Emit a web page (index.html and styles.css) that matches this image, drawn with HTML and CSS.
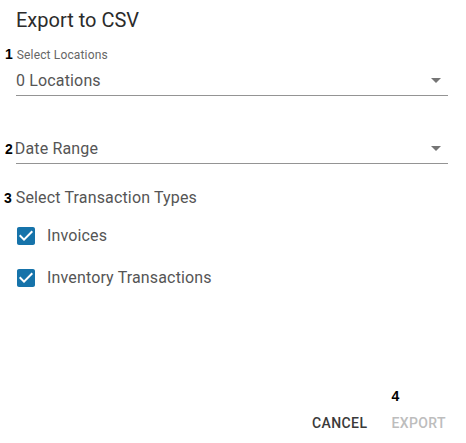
FILE: index.html
```html
<!DOCTYPE html>
<html lang="en">
<head>
<meta charset="utf-8">
<title>Export to CSV</title>
<link rel="stylesheet" href="styles.css">
</head>
<body>
<div class="dialog">
  <h2 class="title">Export to CSV</h2>

  <div class="field field-locations">
    <div class="field-label"><b class="mark mark-1">1</b>Select Locations</div>
    <div class="select-row">
      <span class="select-value">0 Locations</span>
      <svg class="arrow" viewBox="0 0 24 24" width="24" height="24"><path d="M7 9l5 5 5-5z"/></svg>
    </div>
  </div>

  <div class="field field-dates">
    <div class="select-row">
      <span class="select-value"><b class="mark mark-2">2</b>Date Range</span>
      <svg class="arrow" viewBox="0 0 24 24" width="24" height="24"><path d="M7 9l5 5 5-5z"/></svg>
    </div>
  </div>

  <div class="group">
    <div class="group-label"><b class="mark mark-3">3</b>Select Transaction Types</div>
    <label class="check-row">
      <span class="check-btn">
        <svg viewBox="0 0 24 24" width="24" height="24"><path d="M19 3H5c-1.11 0-2 .9-2 2v14c0 1.1.89 2 2 2h14c1.11 0 2-.9 2-2V5c0-1.1-.89-2-2-2zm-9 14l-5-5 1.410-1.41L10 14.170l7.59-7.59L19 8l-9 9z"/></svg>
      </span>
      <span class="check-text">Invoices</span>
    </label>
    <label class="check-row">
      <span class="check-btn">
        <svg viewBox="0 0 24 24" width="24" height="24"><path d="M19 3H5c-1.11 0-2 .9-2 2v14c0 1.1.89 2 2 2h14c1.11 0 2-.9 2-2V5c0-1.1-.89-2-2-2zm-9 14l-5-5 1.410-1.41L10 14.170l7.59-7.59L19 8l-9 9z"/></svg>
      </span>
      <span class="check-text">Inventory Transactions</span>
    </label>
  </div>

  <div class="actions">
    <button class="btn btn-cancel" type="button">Cancel</button>
    <button class="btn btn-export" type="button" disabled><b class="mark mark-4">4</b>Export</button>
  </div>
</div>
</body>
</html>
```

FILE: styles.css
```css
* { box-sizing: border-box; }

html, body {
  margin: 0;
  padding: 0;
  background: #ffffff;
}

body {
  font-family: Roboto, "Liberation Sans", Arial, sans-serif;
  color: #555555;
}

.dialog {
  width: 466px;
  height: 443px;
  padding: 8px 18px 2px 16px;
  display: flex;
  flex-direction: column;
  background: #ffffff;
}

.title {
  margin: 0;
  font-size: 20px;
  line-height: 24px;
  font-weight: 400;
  color: #2b2b2b;
}

.mark {
  font-family: "Liberation Sans", Arial, sans-serif;
  font-weight: 700;
  font-size: 14px;
  line-height: 0;
  letter-spacing: 0;
  color: #000000;
}

.field-locations {
  margin-top: 15px;
}

.field-label {
  font-size: 12px;
  line-height: 16px;
  letter-spacing: 0.15px;
  color: #666666;
}

.mark-1 {
  margin-left: -11px;
  margin-right: 4px;
}

.select-row {
  display: flex;
  align-items: center;
  justify-content: space-between;
  padding-bottom: 2px;
  border-bottom: 1px solid #949494;
}

.field-locations .select-row {
  margin-top: 6px;
}

.field-dates {
  margin-top: 41px;
}

.select-value {
  font-size: 16px;
  line-height: 24px;
  letter-spacing: 0.15px;
  color: #555555;
}

.mark-2 {
  margin-left: -11px;
  margin-right: 2px;
}

.arrow {
  display: block;
  fill: #757575;
}

.group {
  margin-top: 22px;
}

.group-label {
  font-size: 16px;
  line-height: 24px;
  letter-spacing: 0.15px;
  color: #555555;
  margin-bottom: 5px;
}

.mark-3 {
  margin-left: -12px;
  margin-right: 4px;
}

.check-row {
  display: flex;
  align-items: center;
  height: 42px;
  margin-left: -11px;
  cursor: pointer;
}

.check-btn {
  display: flex;
  align-items: center;
  justify-content: center;
  width: 42px;
  height: 42px;
}

.check-btn svg {
  display: block;
  fill: #1673aa;
}

.check-text {
  font-size: 16px;
  line-height: 24px;
  letter-spacing: 0.15px;
  color: #555555;
}

.actions {
  margin-top: auto;
  display: flex;
  justify-content: flex-end;
  gap: 8px;
  margin-right: -6px;
}

.btn {
  position: relative;
  min-width: 64px;
  padding: 6px 8px;
  border: 0;
  background: transparent;
  font-family: Roboto, "Liberation Sans", Arial, sans-serif;
  font-size: 14px;
  line-height: 24px;
  font-weight: 500;
  letter-spacing: 0.4px;
  text-transform: uppercase;
  cursor: pointer;
}

.btn-cancel {
  color: #3a3a3a;
}

.btn-export {
  color: #bdbdbd;
  cursor: default;
}

.mark-4 {
  position: absolute;
  left: 8px;
  bottom: 100%;
  margin-bottom: 2px;
  line-height: 14px;
}
```
